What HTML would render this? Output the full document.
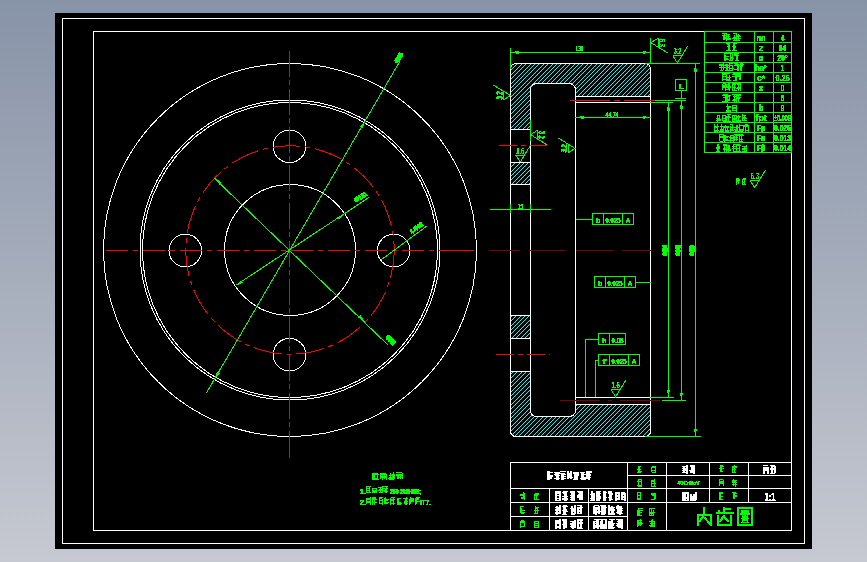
<!DOCTYPE html><html><head><meta charset="utf-8"><style>
html,body{margin:0;padding:0;width:867px;height:562px;overflow:hidden;font-family:"Liberation Sans",sans-serif}
body{background:linear-gradient(180deg,#8793a7 0%,#c6c9d1 100%)}
</style></head><body><svg width="867" height="562" viewBox="0 0 867 562" shape-rendering="crispEdges" style="position:absolute;left:0;top:0"><defs><filter id="px" x="-20%" y="-40%" width="140%" height="180%"><feComponentTransfer><feFuncA type="discrete" tableValues="0 1 1 1 1"/></feComponentTransfer></filter></defs>
<rect x="55" y="13" width="757" height="536" fill="#000"/>
<rect x="62.5" y="18.5" width="742" height="525" fill="none" stroke="#ffffff" />
<rect x="93.5" y="31.5" width="698" height="499" fill="none" stroke="#ffffff" />
<circle cx="290" cy="250" r="186.5" fill="none" stroke="#ffffff" />
<circle cx="290" cy="250" r="150" fill="none" stroke="#ffffff" />
<circle cx="290" cy="250" r="147.5" fill="none" stroke="#ffffff" />
<circle cx="290" cy="250" r="65.5" fill="none" stroke="#ffffff" />
<circle cx="185.3" cy="250.5" r="16.3" fill="none" stroke="#ffffff" />
<circle cx="393.7" cy="250.5" r="16.3" fill="none" stroke="#ffffff" />
<circle cx="289.5" cy="146.3" r="16.3" fill="none" stroke="#ffffff" />
<circle cx="289.5" cy="354.7" r="16.3" fill="none" stroke="#ffffff" />
<circle cx="290" cy="250" r="104.2" fill="none" stroke="#ff0000" stroke-dasharray="28 5 5 5"/>
<path d="M105.5,250.5L127.5,250.5M132.5,250.5L137.5,250.5M142.5,250.5L164.5,250.5M169.5,250.5L174.5,250.5M179.5,250.5L201.5,250.5M206.5,250.5L211.5,250.5M216.5,250.5L238.5,250.5M243.5,250.5L248.5,250.5M253.5,250.5L275.5,250.5M280.5,250.5L285.5,250.5M290.5,250.5L312.5,250.5M317.5,250.5L322.5,250.5M327.5,250.5L349.5,250.5M354.5,250.5L359.5,250.5M364.5,250.5L386.5,250.5M391.5,250.5L396.5,250.5M401.5,250.5L423.5,250.5M428.5,250.5L433.5,250.5M438.5,250.5L474.0,250.5" stroke="#ff0000"/>
<path d="M289.5,51.0L289.5,77.0M289.5,80.0L289.5,85.0M289.5,89.0L289.5,115.0M289.5,118.0L289.5,123.0M289.5,127.0L289.5,153.0M289.5,156.0L289.5,161.0M289.5,165.0L289.5,191.0M289.5,194.0L289.5,199.0M289.5,203.0L289.5,229.0M289.5,232.0L289.5,237.0M289.5,241.0L289.5,267.0M289.5,270.0L289.5,275.0M289.5,279.0L289.5,305.0M289.5,308.0L289.5,313.0M289.5,317.0L289.5,343.0M289.5,346.0L289.5,351.0M289.5,355.0L289.5,381.0M289.5,384.0L289.5,389.0M289.5,393.0L289.5,419.0M289.5,422.0L289.5,427.0M289.5,431.0L289.5,458.0" stroke="#ff0000"/>
<polygon points="365.4,120.9 362.8,128.6 360.0,127.0" fill="#00ff00"/>
<polygon points="214.6,379.1 217.2,371.4 220.0,373.0" fill="#00ff00"/>
<polygon points="214.8,177.9 221.7,182.3 219.5,184.6" fill="#00ff00"/>
<polygon points="365.2,322.1 358.3,317.7 360.5,315.4" fill="#00ff00"/>
<polygon points="344.8,214.1 339.0,219.9 337.2,217.2" fill="#00ff00"/>
<polygon points="235.2,285.9 241.0,280.1 242.8,282.8" fill="#00ff00"/>
<line x1="206.4" y1="393" x2="399.8" y2="61.4" stroke="#00ff00" />
<line x1="214" y1="178" x2="388" y2="345" stroke="#00ff00" />
<line x1="235.6" y1="285.4" x2="369.1" y2="197.4" stroke="#00ff00" />
<line x1="381" y1="260" x2="427.5" y2="225.5" stroke="#00ff00" />
<defs><pattern id="hat" patternUnits="userSpaceOnUse" width="4.4" height="4.4" patternTransform="rotate(45)"><rect x="0" y="0" width="1" height="4.4" fill="#00ffff"/></pattern></defs>
<defs><pattern id="hat2" patternUnits="userSpaceOnUse" width="3.1" height="10" patternTransform="rotate(45)"><rect x="0" y="0" width="0.72" height="10" fill="#00ffff" shape-rendering="crispEdges"/></pattern></defs>
<clipPath id="cp0"><path d="M510.5,129.5 L510.5,69.5 Q510.5,63.5 516.5,63.5 L644.5,63.5 Q650.5,63.5 650.5,69.5 L650.5,96.5 L575.5,96.5 L575.5,90.5 Q575.5,83.5 568.5,83.5 L537.5,83.5 Q530.5,83.5 530.5,90.5 L530.5,129.5 Z"/></clipPath>
<path d="M-18.5,440.5L362.5,60.5M-14.5,440.5L366.5,60.5M-9.5,440.5L371.5,60.5M-5.5,440.5L375.5,60.5M0.5,440.5L380.5,60.5M4.5,440.5L384.5,60.5M8.5,440.5L388.5,60.5M13.5,440.5L393.5,60.5M17.5,440.5L397.5,60.5M22.5,440.5L402.5,60.5M26.5,440.5L406.5,60.5M30.5,440.5L410.5,60.5M35.5,440.5L415.5,60.5M39.5,440.5L419.5,60.5M44.5,440.5L424.5,60.5M48.5,440.5L428.5,60.5M52.5,440.5L432.5,60.5M57.5,440.5L437.5,60.5M61.5,440.5L441.5,60.5M66.5,440.5L446.5,60.5M70.5,440.5L450.5,60.5M74.5,440.5L454.5,60.5M79.5,440.5L459.5,60.5M83.5,440.5L463.5,60.5M88.5,440.5L468.5,60.5M92.5,440.5L472.5,60.5M96.5,440.5L476.5,60.5M101.5,440.5L481.5,60.5M105.5,440.5L485.5,60.5M110.5,440.5L490.5,60.5M114.5,440.5L494.5,60.5M118.5,440.5L498.5,60.5M123.5,440.5L503.5,60.5M127.5,440.5L507.5,60.5M132.5,440.5L512.5,60.5M136.5,440.5L516.5,60.5M140.5,440.5L520.5,60.5M145.5,440.5L525.5,60.5M149.5,440.5L529.5,60.5M154.5,440.5L534.5,60.5M158.5,440.5L538.5,60.5M162.5,440.5L542.5,60.5M167.5,440.5L547.5,60.5M171.5,440.5L551.5,60.5M176.5,440.5L556.5,60.5M180.5,440.5L560.5,60.5M184.5,440.5L564.5,60.5M189.5,440.5L569.5,60.5M193.5,440.5L573.5,60.5M198.5,440.5L578.5,60.5M202.5,440.5L582.5,60.5M206.5,440.5L586.5,60.5M211.5,440.5L591.5,60.5M215.5,440.5L595.5,60.5M220.5,440.5L600.5,60.5M224.5,440.5L604.5,60.5M228.5,440.5L608.5,60.5M233.5,440.5L613.5,60.5M237.5,440.5L617.5,60.5M242.5,440.5L622.5,60.5M246.5,440.5L626.5,60.5M250.5,440.5L630.5,60.5M255.5,440.5L635.5,60.5M259.5,440.5L639.5,60.5M264.5,440.5L644.5,60.5M268.5,440.5L648.5,60.5M272.5,440.5L652.5,60.5M277.5,440.5L657.5,60.5M281.5,440.5L661.5,60.5M286.5,440.5L666.5,60.5M290.5,440.5L670.5,60.5M294.5,440.5L674.5,60.5M299.5,440.5L679.5,60.5M303.5,440.5L683.5,60.5M308.5,440.5L688.5,60.5M312.5,440.5L692.5,60.5M316.5,440.5L696.5,60.5M321.5,440.5L701.5,60.5M325.5,440.5L705.5,60.5M330.5,440.5L710.5,60.5M334.5,440.5L714.5,60.5M338.5,440.5L718.5,60.5M343.5,440.5L723.5,60.5M347.5,440.5L727.5,60.5M352.5,440.5L732.5,60.5M356.5,440.5L736.5,60.5M360.5,440.5L740.5,60.5M365.5,440.5L745.5,60.5M369.5,440.5L749.5,60.5M374.5,440.5L754.5,60.5M378.5,440.5L758.5,60.5M382.5,440.5L762.5,60.5M387.5,440.5L767.5,60.5M391.5,440.5L771.5,60.5M396.5,440.5L776.5,60.5M400.5,440.5L780.5,60.5M404.5,440.5L784.5,60.5M409.5,440.5L789.5,60.5M413.5,440.5L793.5,60.5M418.5,440.5L798.5,60.5M422.5,440.5L802.5,60.5M426.5,440.5L806.5,60.5M431.5,440.5L811.5,60.5M435.5,440.5L815.5,60.5M440.5,440.5L820.5,60.5M444.5,440.5L824.5,60.5M448.5,440.5L828.5,60.5M453.5,440.5L833.5,60.5M457.5,440.5L837.5,60.5M462.5,440.5L842.5,60.5M466.5,440.5L846.5,60.5M470.5,440.5L850.5,60.5M475.5,440.5L855.5,60.5M479.5,440.5L859.5,60.5M484.5,440.5L864.5,60.5M488.5,440.5L868.5,60.5M492.5,440.5L872.5,60.5M497.5,440.5L877.5,60.5M501.5,440.5L881.5,60.5M506.5,440.5L886.5,60.5M510.5,440.5L890.5,60.5M514.5,440.5L894.5,60.5M519.5,440.5L899.5,60.5M523.5,440.5L903.5,60.5M528.5,440.5L908.5,60.5M532.5,440.5L912.5,60.5M536.5,440.5L916.5,60.5M541.5,440.5L921.5,60.5M545.5,440.5L925.5,60.5M550.5,440.5L930.5,60.5M554.5,440.5L934.5,60.5M558.5,440.5L938.5,60.5M563.5,440.5L943.5,60.5M567.5,440.5L947.5,60.5M572.5,440.5L952.5,60.5M576.5,440.5L956.5,60.5M580.5,440.5L960.5,60.5M585.5,440.5L965.5,60.5M589.5,440.5L969.5,60.5M594.5,440.5L974.5,60.5M598.5,440.5L978.5,60.5M602.5,440.5L982.5,60.5M607.5,440.5L987.5,60.5M611.5,440.5L991.5,60.5M616.5,440.5L996.5,60.5M620.5,440.5L1000.5,60.5M624.5,440.5L1004.5,60.5M629.5,440.5L1009.5,60.5M633.5,440.5L1013.5,60.5M638.5,440.5L1018.5,60.5M642.5,440.5L1022.5,60.5M646.5,440.5L1026.5,60.5M651.5,440.5L1031.5,60.5M655.5,440.5L1035.5,60.5M660.5,440.5L1040.5,60.5M664.5,440.5L1044.5,60.5M668.5,440.5L1048.5,60.5M673.5,440.5L1053.5,60.5M677.5,440.5L1057.5,60.5M682.5,440.5L1062.5,60.5M686.5,440.5L1066.5,60.5M690.5,440.5L1070.5,60.5M695.5,440.5L1075.5,60.5M699.5,440.5L1079.5,60.5M704.5,440.5L1084.5,60.5M708.5,440.5L1088.5,60.5M712.5,440.5L1092.5,60.5M717.5,440.5L1097.5,60.5M721.5,440.5L1101.5,60.5M726.5,440.5L1106.5,60.5M730.5,440.5L1110.5,60.5M734.5,440.5L1114.5,60.5M739.5,440.5L1119.5,60.5M743.5,440.5L1123.5,60.5M748.5,440.5L1128.5,60.5M752.5,440.5L1132.5,60.5M756.5,440.5L1136.5,60.5M761.5,440.5L1141.5,60.5M765.5,440.5L1145.5,60.5M770.5,440.5L1150.5,60.5" stroke="#00ffff" stroke-width="1" shape-rendering="crispEdges" clip-path="url(#cp0)"/>
<path d="M510.5,129.5 L510.5,69.5 Q510.5,63.5 516.5,63.5 L644.5,63.5 Q650.5,63.5 650.5,69.5 L650.5,96.5 L575.5,96.5 L575.5,90.5 Q575.5,83.5 568.5,83.5 L537.5,83.5 Q530.5,83.5 530.5,90.5 L530.5,129.5 Z" fill="none" stroke="#ffffff"/>
<clipPath id="cp1"><path d="M510.5,162.5 L530.5,162.5 L530.5,184.5 L510.5,184.5 Z"/></clipPath>
<path d="M-18.5,440.5L362.5,60.5M-14.5,440.5L366.5,60.5M-9.5,440.5L371.5,60.5M-5.5,440.5L375.5,60.5M0.5,440.5L380.5,60.5M4.5,440.5L384.5,60.5M8.5,440.5L388.5,60.5M13.5,440.5L393.5,60.5M17.5,440.5L397.5,60.5M22.5,440.5L402.5,60.5M26.5,440.5L406.5,60.5M30.5,440.5L410.5,60.5M35.5,440.5L415.5,60.5M39.5,440.5L419.5,60.5M44.5,440.5L424.5,60.5M48.5,440.5L428.5,60.5M52.5,440.5L432.5,60.5M57.5,440.5L437.5,60.5M61.5,440.5L441.5,60.5M66.5,440.5L446.5,60.5M70.5,440.5L450.5,60.5M74.5,440.5L454.5,60.5M79.5,440.5L459.5,60.5M83.5,440.5L463.5,60.5M88.5,440.5L468.5,60.5M92.5,440.5L472.5,60.5M96.5,440.5L476.5,60.5M101.5,440.5L481.5,60.5M105.5,440.5L485.5,60.5M110.5,440.5L490.5,60.5M114.5,440.5L494.5,60.5M118.5,440.5L498.5,60.5M123.5,440.5L503.5,60.5M127.5,440.5L507.5,60.5M132.5,440.5L512.5,60.5M136.5,440.5L516.5,60.5M140.5,440.5L520.5,60.5M145.5,440.5L525.5,60.5M149.5,440.5L529.5,60.5M154.5,440.5L534.5,60.5M158.5,440.5L538.5,60.5M162.5,440.5L542.5,60.5M167.5,440.5L547.5,60.5M171.5,440.5L551.5,60.5M176.5,440.5L556.5,60.5M180.5,440.5L560.5,60.5M184.5,440.5L564.5,60.5M189.5,440.5L569.5,60.5M193.5,440.5L573.5,60.5M198.5,440.5L578.5,60.5M202.5,440.5L582.5,60.5M206.5,440.5L586.5,60.5M211.5,440.5L591.5,60.5M215.5,440.5L595.5,60.5M220.5,440.5L600.5,60.5M224.5,440.5L604.5,60.5M228.5,440.5L608.5,60.5M233.5,440.5L613.5,60.5M237.5,440.5L617.5,60.5M242.5,440.5L622.5,60.5M246.5,440.5L626.5,60.5M250.5,440.5L630.5,60.5M255.5,440.5L635.5,60.5M259.5,440.5L639.5,60.5M264.5,440.5L644.5,60.5M268.5,440.5L648.5,60.5M272.5,440.5L652.5,60.5M277.5,440.5L657.5,60.5M281.5,440.5L661.5,60.5M286.5,440.5L666.5,60.5M290.5,440.5L670.5,60.5M294.5,440.5L674.5,60.5M299.5,440.5L679.5,60.5M303.5,440.5L683.5,60.5M308.5,440.5L688.5,60.5M312.5,440.5L692.5,60.5M316.5,440.5L696.5,60.5M321.5,440.5L701.5,60.5M325.5,440.5L705.5,60.5M330.5,440.5L710.5,60.5M334.5,440.5L714.5,60.5M338.5,440.5L718.5,60.5M343.5,440.5L723.5,60.5M347.5,440.5L727.5,60.5M352.5,440.5L732.5,60.5M356.5,440.5L736.5,60.5M360.5,440.5L740.5,60.5M365.5,440.5L745.5,60.5M369.5,440.5L749.5,60.5M374.5,440.5L754.5,60.5M378.5,440.5L758.5,60.5M382.5,440.5L762.5,60.5M387.5,440.5L767.5,60.5M391.5,440.5L771.5,60.5M396.5,440.5L776.5,60.5M400.5,440.5L780.5,60.5M404.5,440.5L784.5,60.5M409.5,440.5L789.5,60.5M413.5,440.5L793.5,60.5M418.5,440.5L798.5,60.5M422.5,440.5L802.5,60.5M426.5,440.5L806.5,60.5M431.5,440.5L811.5,60.5M435.5,440.5L815.5,60.5M440.5,440.5L820.5,60.5M444.5,440.5L824.5,60.5M448.5,440.5L828.5,60.5M453.5,440.5L833.5,60.5M457.5,440.5L837.5,60.5M462.5,440.5L842.5,60.5M466.5,440.5L846.5,60.5M470.5,440.5L850.5,60.5M475.5,440.5L855.5,60.5M479.5,440.5L859.5,60.5M484.5,440.5L864.5,60.5M488.5,440.5L868.5,60.5M492.5,440.5L872.5,60.5M497.5,440.5L877.5,60.5M501.5,440.5L881.5,60.5M506.5,440.5L886.5,60.5M510.5,440.5L890.5,60.5M514.5,440.5L894.5,60.5M519.5,440.5L899.5,60.5M523.5,440.5L903.5,60.5M528.5,440.5L908.5,60.5M532.5,440.5L912.5,60.5M536.5,440.5L916.5,60.5M541.5,440.5L921.5,60.5M545.5,440.5L925.5,60.5M550.5,440.5L930.5,60.5M554.5,440.5L934.5,60.5M558.5,440.5L938.5,60.5M563.5,440.5L943.5,60.5M567.5,440.5L947.5,60.5M572.5,440.5L952.5,60.5M576.5,440.5L956.5,60.5M580.5,440.5L960.5,60.5M585.5,440.5L965.5,60.5M589.5,440.5L969.5,60.5M594.5,440.5L974.5,60.5M598.5,440.5L978.5,60.5M602.5,440.5L982.5,60.5M607.5,440.5L987.5,60.5M611.5,440.5L991.5,60.5M616.5,440.5L996.5,60.5M620.5,440.5L1000.5,60.5M624.5,440.5L1004.5,60.5M629.5,440.5L1009.5,60.5M633.5,440.5L1013.5,60.5M638.5,440.5L1018.5,60.5M642.5,440.5L1022.5,60.5M646.5,440.5L1026.5,60.5M651.5,440.5L1031.5,60.5M655.5,440.5L1035.5,60.5M660.5,440.5L1040.5,60.5M664.5,440.5L1044.5,60.5M668.5,440.5L1048.5,60.5M673.5,440.5L1053.5,60.5M677.5,440.5L1057.5,60.5M682.5,440.5L1062.5,60.5M686.5,440.5L1066.5,60.5M690.5,440.5L1070.5,60.5M695.5,440.5L1075.5,60.5M699.5,440.5L1079.5,60.5M704.5,440.5L1084.5,60.5M708.5,440.5L1088.5,60.5M712.5,440.5L1092.5,60.5M717.5,440.5L1097.5,60.5M721.5,440.5L1101.5,60.5M726.5,440.5L1106.5,60.5M730.5,440.5L1110.5,60.5M734.5,440.5L1114.5,60.5M739.5,440.5L1119.5,60.5M743.5,440.5L1123.5,60.5M748.5,440.5L1128.5,60.5M752.5,440.5L1132.5,60.5M756.5,440.5L1136.5,60.5M761.5,440.5L1141.5,60.5M765.5,440.5L1145.5,60.5M770.5,440.5L1150.5,60.5" stroke="#00ffff" stroke-width="1" shape-rendering="crispEdges" clip-path="url(#cp1)"/>
<path d="M510.5,162.5 L530.5,162.5 L530.5,184.5 L510.5,184.5 Z" fill="none" stroke="#ffffff"/>
<clipPath id="cp2"><path d="M510.5,315.5 L530.5,315.5 L530.5,338.5 L510.5,338.5 Z"/></clipPath>
<path d="M-18.5,440.5L362.5,60.5M-14.5,440.5L366.5,60.5M-9.5,440.5L371.5,60.5M-5.5,440.5L375.5,60.5M0.5,440.5L380.5,60.5M4.5,440.5L384.5,60.5M8.5,440.5L388.5,60.5M13.5,440.5L393.5,60.5M17.5,440.5L397.5,60.5M22.5,440.5L402.5,60.5M26.5,440.5L406.5,60.5M30.5,440.5L410.5,60.5M35.5,440.5L415.5,60.5M39.5,440.5L419.5,60.5M44.5,440.5L424.5,60.5M48.5,440.5L428.5,60.5M52.5,440.5L432.5,60.5M57.5,440.5L437.5,60.5M61.5,440.5L441.5,60.5M66.5,440.5L446.5,60.5M70.5,440.5L450.5,60.5M74.5,440.5L454.5,60.5M79.5,440.5L459.5,60.5M83.5,440.5L463.5,60.5M88.5,440.5L468.5,60.5M92.5,440.5L472.5,60.5M96.5,440.5L476.5,60.5M101.5,440.5L481.5,60.5M105.5,440.5L485.5,60.5M110.5,440.5L490.5,60.5M114.5,440.5L494.5,60.5M118.5,440.5L498.5,60.5M123.5,440.5L503.5,60.5M127.5,440.5L507.5,60.5M132.5,440.5L512.5,60.5M136.5,440.5L516.5,60.5M140.5,440.5L520.5,60.5M145.5,440.5L525.5,60.5M149.5,440.5L529.5,60.5M154.5,440.5L534.5,60.5M158.5,440.5L538.5,60.5M162.5,440.5L542.5,60.5M167.5,440.5L547.5,60.5M171.5,440.5L551.5,60.5M176.5,440.5L556.5,60.5M180.5,440.5L560.5,60.5M184.5,440.5L564.5,60.5M189.5,440.5L569.5,60.5M193.5,440.5L573.5,60.5M198.5,440.5L578.5,60.5M202.5,440.5L582.5,60.5M206.5,440.5L586.5,60.5M211.5,440.5L591.5,60.5M215.5,440.5L595.5,60.5M220.5,440.5L600.5,60.5M224.5,440.5L604.5,60.5M228.5,440.5L608.5,60.5M233.5,440.5L613.5,60.5M237.5,440.5L617.5,60.5M242.5,440.5L622.5,60.5M246.5,440.5L626.5,60.5M250.5,440.5L630.5,60.5M255.5,440.5L635.5,60.5M259.5,440.5L639.5,60.5M264.5,440.5L644.5,60.5M268.5,440.5L648.5,60.5M272.5,440.5L652.5,60.5M277.5,440.5L657.5,60.5M281.5,440.5L661.5,60.5M286.5,440.5L666.5,60.5M290.5,440.5L670.5,60.5M294.5,440.5L674.5,60.5M299.5,440.5L679.5,60.5M303.5,440.5L683.5,60.5M308.5,440.5L688.5,60.5M312.5,440.5L692.5,60.5M316.5,440.5L696.5,60.5M321.5,440.5L701.5,60.5M325.5,440.5L705.5,60.5M330.5,440.5L710.5,60.5M334.5,440.5L714.5,60.5M338.5,440.5L718.5,60.5M343.5,440.5L723.5,60.5M347.5,440.5L727.5,60.5M352.5,440.5L732.5,60.5M356.5,440.5L736.5,60.5M360.5,440.5L740.5,60.5M365.5,440.5L745.5,60.5M369.5,440.5L749.5,60.5M374.5,440.5L754.5,60.5M378.5,440.5L758.5,60.5M382.5,440.5L762.5,60.5M387.5,440.5L767.5,60.5M391.5,440.5L771.5,60.5M396.5,440.5L776.5,60.5M400.5,440.5L780.5,60.5M404.5,440.5L784.5,60.5M409.5,440.5L789.5,60.5M413.5,440.5L793.5,60.5M418.5,440.5L798.5,60.5M422.5,440.5L802.5,60.5M426.5,440.5L806.5,60.5M431.5,440.5L811.5,60.5M435.5,440.5L815.5,60.5M440.5,440.5L820.5,60.5M444.5,440.5L824.5,60.5M448.5,440.5L828.5,60.5M453.5,440.5L833.5,60.5M457.5,440.5L837.5,60.5M462.5,440.5L842.5,60.5M466.5,440.5L846.5,60.5M470.5,440.5L850.5,60.5M475.5,440.5L855.5,60.5M479.5,440.5L859.5,60.5M484.5,440.5L864.5,60.5M488.5,440.5L868.5,60.5M492.5,440.5L872.5,60.5M497.5,440.5L877.5,60.5M501.5,440.5L881.5,60.5M506.5,440.5L886.5,60.5M510.5,440.5L890.5,60.5M514.5,440.5L894.5,60.5M519.5,440.5L899.5,60.5M523.5,440.5L903.5,60.5M528.5,440.5L908.5,60.5M532.5,440.5L912.5,60.5M536.5,440.5L916.5,60.5M541.5,440.5L921.5,60.5M545.5,440.5L925.5,60.5M550.5,440.5L930.5,60.5M554.5,440.5L934.5,60.5M558.5,440.5L938.5,60.5M563.5,440.5L943.5,60.5M567.5,440.5L947.5,60.5M572.5,440.5L952.5,60.5M576.5,440.5L956.5,60.5M580.5,440.5L960.5,60.5M585.5,440.5L965.5,60.5M589.5,440.5L969.5,60.5M594.5,440.5L974.5,60.5M598.5,440.5L978.5,60.5M602.5,440.5L982.5,60.5M607.5,440.5L987.5,60.5M611.5,440.5L991.5,60.5M616.5,440.5L996.5,60.5M620.5,440.5L1000.5,60.5M624.5,440.5L1004.5,60.5M629.5,440.5L1009.5,60.5M633.5,440.5L1013.5,60.5M638.5,440.5L1018.5,60.5M642.5,440.5L1022.5,60.5M646.5,440.5L1026.5,60.5M651.5,440.5L1031.5,60.5M655.5,440.5L1035.5,60.5M660.5,440.5L1040.5,60.5M664.5,440.5L1044.5,60.5M668.5,440.5L1048.5,60.5M673.5,440.5L1053.5,60.5M677.5,440.5L1057.5,60.5M682.5,440.5L1062.5,60.5M686.5,440.5L1066.5,60.5M690.5,440.5L1070.5,60.5M695.5,440.5L1075.5,60.5M699.5,440.5L1079.5,60.5M704.5,440.5L1084.5,60.5M708.5,440.5L1088.5,60.5M712.5,440.5L1092.5,60.5M717.5,440.5L1097.5,60.5M721.5,440.5L1101.5,60.5M726.5,440.5L1106.5,60.5M730.5,440.5L1110.5,60.5M734.5,440.5L1114.5,60.5M739.5,440.5L1119.5,60.5M743.5,440.5L1123.5,60.5M748.5,440.5L1128.5,60.5M752.5,440.5L1132.5,60.5M756.5,440.5L1136.5,60.5M761.5,440.5L1141.5,60.5M765.5,440.5L1145.5,60.5M770.5,440.5L1150.5,60.5" stroke="#00ffff" stroke-width="1" shape-rendering="crispEdges" clip-path="url(#cp2)"/>
<path d="M510.5,315.5 L530.5,315.5 L530.5,338.5 L510.5,338.5 Z" fill="none" stroke="#ffffff"/>
<clipPath id="cp3"><path d="M510.5,371.5 L530.5,371.5 L530.5,409.5 Q530.5,416.5 537.5,416.5 L568.5,416.5 Q575.5,416.5 575.5,409.5 L575.5,404.5 L650.5,404.5 L650.5,430.5 Q650.5,436.5 644.5,436.5 L516.5,436.5 Q510.5,436.5 510.5,430.5 Z"/></clipPath>
<path d="M-18.5,440.5L362.5,60.5M-14.5,440.5L366.5,60.5M-9.5,440.5L371.5,60.5M-5.5,440.5L375.5,60.5M0.5,440.5L380.5,60.5M4.5,440.5L384.5,60.5M8.5,440.5L388.5,60.5M13.5,440.5L393.5,60.5M17.5,440.5L397.5,60.5M22.5,440.5L402.5,60.5M26.5,440.5L406.5,60.5M30.5,440.5L410.5,60.5M35.5,440.5L415.5,60.5M39.5,440.5L419.5,60.5M44.5,440.5L424.5,60.5M48.5,440.5L428.5,60.5M52.5,440.5L432.5,60.5M57.5,440.5L437.5,60.5M61.5,440.5L441.5,60.5M66.5,440.5L446.5,60.5M70.5,440.5L450.5,60.5M74.5,440.5L454.5,60.5M79.5,440.5L459.5,60.5M83.5,440.5L463.5,60.5M88.5,440.5L468.5,60.5M92.5,440.5L472.5,60.5M96.5,440.5L476.5,60.5M101.5,440.5L481.5,60.5M105.5,440.5L485.5,60.5M110.5,440.5L490.5,60.5M114.5,440.5L494.5,60.5M118.5,440.5L498.5,60.5M123.5,440.5L503.5,60.5M127.5,440.5L507.5,60.5M132.5,440.5L512.5,60.5M136.5,440.5L516.5,60.5M140.5,440.5L520.5,60.5M145.5,440.5L525.5,60.5M149.5,440.5L529.5,60.5M154.5,440.5L534.5,60.5M158.5,440.5L538.5,60.5M162.5,440.5L542.5,60.5M167.5,440.5L547.5,60.5M171.5,440.5L551.5,60.5M176.5,440.5L556.5,60.5M180.5,440.5L560.5,60.5M184.5,440.5L564.5,60.5M189.5,440.5L569.5,60.5M193.5,440.5L573.5,60.5M198.5,440.5L578.5,60.5M202.5,440.5L582.5,60.5M206.5,440.5L586.5,60.5M211.5,440.5L591.5,60.5M215.5,440.5L595.5,60.5M220.5,440.5L600.5,60.5M224.5,440.5L604.5,60.5M228.5,440.5L608.5,60.5M233.5,440.5L613.5,60.5M237.5,440.5L617.5,60.5M242.5,440.5L622.5,60.5M246.5,440.5L626.5,60.5M250.5,440.5L630.5,60.5M255.5,440.5L635.5,60.5M259.5,440.5L639.5,60.5M264.5,440.5L644.5,60.5M268.5,440.5L648.5,60.5M272.5,440.5L652.5,60.5M277.5,440.5L657.5,60.5M281.5,440.5L661.5,60.5M286.5,440.5L666.5,60.5M290.5,440.5L670.5,60.5M294.5,440.5L674.5,60.5M299.5,440.5L679.5,60.5M303.5,440.5L683.5,60.5M308.5,440.5L688.5,60.5M312.5,440.5L692.5,60.5M316.5,440.5L696.5,60.5M321.5,440.5L701.5,60.5M325.5,440.5L705.5,60.5M330.5,440.5L710.5,60.5M334.5,440.5L714.5,60.5M338.5,440.5L718.5,60.5M343.5,440.5L723.5,60.5M347.5,440.5L727.5,60.5M352.5,440.5L732.5,60.5M356.5,440.5L736.5,60.5M360.5,440.5L740.5,60.5M365.5,440.5L745.5,60.5M369.5,440.5L749.5,60.5M374.5,440.5L754.5,60.5M378.5,440.5L758.5,60.5M382.5,440.5L762.5,60.5M387.5,440.5L767.5,60.5M391.5,440.5L771.5,60.5M396.5,440.5L776.5,60.5M400.5,440.5L780.5,60.5M404.5,440.5L784.5,60.5M409.5,440.5L789.5,60.5M413.5,440.5L793.5,60.5M418.5,440.5L798.5,60.5M422.5,440.5L802.5,60.5M426.5,440.5L806.5,60.5M431.5,440.5L811.5,60.5M435.5,440.5L815.5,60.5M440.5,440.5L820.5,60.5M444.5,440.5L824.5,60.5M448.5,440.5L828.5,60.5M453.5,440.5L833.5,60.5M457.5,440.5L837.5,60.5M462.5,440.5L842.5,60.5M466.5,440.5L846.5,60.5M470.5,440.5L850.5,60.5M475.5,440.5L855.5,60.5M479.5,440.5L859.5,60.5M484.5,440.5L864.5,60.5M488.5,440.5L868.5,60.5M492.5,440.5L872.5,60.5M497.5,440.5L877.5,60.5M501.5,440.5L881.5,60.5M506.5,440.5L886.5,60.5M510.5,440.5L890.5,60.5M514.5,440.5L894.5,60.5M519.5,440.5L899.5,60.5M523.5,440.5L903.5,60.5M528.5,440.5L908.5,60.5M532.5,440.5L912.5,60.5M536.5,440.5L916.5,60.5M541.5,440.5L921.5,60.5M545.5,440.5L925.5,60.5M550.5,440.5L930.5,60.5M554.5,440.5L934.5,60.5M558.5,440.5L938.5,60.5M563.5,440.5L943.5,60.5M567.5,440.5L947.5,60.5M572.5,440.5L952.5,60.5M576.5,440.5L956.5,60.5M580.5,440.5L960.5,60.5M585.5,440.5L965.5,60.5M589.5,440.5L969.5,60.5M594.5,440.5L974.5,60.5M598.5,440.5L978.5,60.5M602.5,440.5L982.5,60.5M607.5,440.5L987.5,60.5M611.5,440.5L991.5,60.5M616.5,440.5L996.5,60.5M620.5,440.5L1000.5,60.5M624.5,440.5L1004.5,60.5M629.5,440.5L1009.5,60.5M633.5,440.5L1013.5,60.5M638.5,440.5L1018.5,60.5M642.5,440.5L1022.5,60.5M646.5,440.5L1026.5,60.5M651.5,440.5L1031.5,60.5M655.5,440.5L1035.5,60.5M660.5,440.5L1040.5,60.5M664.5,440.5L1044.5,60.5M668.5,440.5L1048.5,60.5M673.5,440.5L1053.5,60.5M677.5,440.5L1057.5,60.5M682.5,440.5L1062.5,60.5M686.5,440.5L1066.5,60.5M690.5,440.5L1070.5,60.5M695.5,440.5L1075.5,60.5M699.5,440.5L1079.5,60.5M704.5,440.5L1084.5,60.5M708.5,440.5L1088.5,60.5M712.5,440.5L1092.5,60.5M717.5,440.5L1097.5,60.5M721.5,440.5L1101.5,60.5M726.5,440.5L1106.5,60.5M730.5,440.5L1110.5,60.5M734.5,440.5L1114.5,60.5M739.5,440.5L1119.5,60.5M743.5,440.5L1123.5,60.5M748.5,440.5L1128.5,60.5M752.5,440.5L1132.5,60.5M756.5,440.5L1136.5,60.5M761.5,440.5L1141.5,60.5M765.5,440.5L1145.5,60.5M770.5,440.5L1150.5,60.5" stroke="#00ffff" stroke-width="1" shape-rendering="crispEdges" clip-path="url(#cp3)"/>
<path d="M510.5,371.5 L530.5,371.5 L530.5,409.5 Q530.5,416.5 537.5,416.5 L568.5,416.5 Q575.5,416.5 575.5,409.5 L575.5,404.5 L650.5,404.5 L650.5,430.5 Q650.5,436.5 644.5,436.5 L516.5,436.5 Q510.5,436.5 510.5,430.5 Z" fill="none" stroke="#ffffff"/>
<line x1="510.5" y1="129.5" x2="510.5" y2="371.5" stroke="#ffffff" />
<line x1="530.5" y1="129.5" x2="530.5" y2="371.5" stroke="#ffffff" />
<line x1="575.5" y1="90.5" x2="575.5" y2="404.5" stroke="#ffffff" />
<line x1="650.5" y1="96.5" x2="650.5" y2="404.5" stroke="#ffffff" />
<line x1="570" y1="100.5" x2="655" y2="100.5" stroke="#ff0000" stroke-dasharray="40 4 6 4 60"/>
<line x1="530.5" y1="120" x2="530.5" y2="141" stroke="#00ff00" />
<line x1="576" y1="102.5" x2="650" y2="102.5" stroke="#ffffff" />
<line x1="576" y1="397.5" x2="650" y2="397.5" stroke="#ffffff" />
<line x1="560" y1="400.5" x2="662" y2="400.5" stroke="#800000" stroke-dasharray="40 8 4 8"/>
<path d="M489,250.5H519M529,250.5H566M576,250.5H613M622,250.5H652" stroke="#800000"/>
<line x1="499" y1="145.5" x2="547" y2="145.5" stroke="#ff0000" stroke-dasharray="18 4 5 4"/>
<line x1="496" y1="354.5" x2="550" y2="354.5" stroke="#ff0000" stroke-dasharray="18 4 5 4"/>
<line x1="510.5" y1="48" x2="510.5" y2="69" stroke="#00ff00" />
<line x1="650.5" y1="38" x2="650.5" y2="63" stroke="#00ff00" />
<line x1="510.5" y1="52.5" x2="650.5" y2="52.5" stroke="#00ff00" />
<line x1="645" y1="63.5" x2="700" y2="63.5" stroke="#00ff00" />
<line x1="645" y1="436.5" x2="701" y2="436.5" stroke="#00ff00" />
<line x1="655" y1="100.5" x2="686" y2="100.5" stroke="#00ff00" />
<line x1="650" y1="102.5" x2="673" y2="102.5" stroke="#00ff00" />
<line x1="650" y1="397.5" x2="673.5" y2="397.5" stroke="#00ff00" />
<line x1="662" y1="400.5" x2="686" y2="400.5" stroke="#00ff00" />
<line x1="668.5" y1="102.5" x2="668.5" y2="397.5" stroke="#00ff00" />
<line x1="681.5" y1="90.5" x2="681.5" y2="98.5" stroke="#00ff00" />
<line x1="675" y1="98.5" x2="686" y2="98.5" stroke="#00ff00" />
<line x1="681.5" y1="100.5" x2="681.5" y2="400.5" stroke="#00ff00" />
<line x1="695.5" y1="63.5" x2="695.5" y2="436.5" stroke="#00ff00" />
<rect x="675.5" y="79.5" width="11" height="11" fill="none" stroke="#00ff00" />
<line x1="575.5" y1="117.5" x2="650.5" y2="117.5" stroke="#00ff00" />
<line x1="490" y1="209.5" x2="551" y2="209.5" stroke="#00ff00" />
<rect x="592.5" y="213.5" width="41" height="11" fill="none" stroke="#00ff00" />
<line x1="603.5" y1="213.5" x2="603.5" y2="224.5" stroke="#00ff00" />
<line x1="622.5" y1="213.5" x2="622.5" y2="224.5" stroke="#00ff00" />
<line x1="575.5" y1="219.5" x2="592" y2="219.5" stroke="#00ff00" />
<rect x="594.5" y="276.5" width="41" height="11" fill="none" stroke="#00ff00" />
<line x1="605.5" y1="276.5" x2="605.5" y2="287.5" stroke="#00ff00" />
<line x1="624.5" y1="276.5" x2="624.5" y2="287.5" stroke="#00ff00" />
<line x1="635" y1="282.5" x2="650.5" y2="282.5" stroke="#00ff00" />
<rect x="598.5" y="333.5" width="27" height="11" fill="none" stroke="#00ff00" />
<line x1="609.5" y1="333.5" x2="609.5" y2="344.5" stroke="#00ff00" />
<polyline points="598,339.5 585.5,339.5 585.5,397" fill="none" stroke="#00ff00" />
<rect x="598.5" y="354.5" width="41" height="11" fill="none" stroke="#00ff00" />
<line x1="609.5" y1="354.5" x2="609.5" y2="365.5" stroke="#00ff00" />
<line x1="628.5" y1="354.5" x2="628.5" y2="365.5" stroke="#00ff00" />
<polyline points="598,360.5 595.5,360.5 595.5,397" fill="none" stroke="#00ff00" />
<rect x="510.5" y="462.5" width="281" height="68" fill="none" stroke="#ffffff" />
<line x1="510.5" y1="488.5" x2="791.5" y2="488.5" stroke="#ffffff" />
<line x1="510.5" y1="502.5" x2="791.5" y2="502.5" stroke="#ffffff" />
<line x1="510.5" y1="516.5" x2="627.5" y2="516.5" stroke="#ffffff" />
<line x1="627.5" y1="475.5" x2="791.5" y2="475.5" stroke="#ffffff" />
<line x1="549.5" y1="488.5" x2="549.5" y2="530.5" stroke="#ffffff" />
<line x1="588.5" y1="488.5" x2="588.5" y2="530.5" stroke="#ffffff" />
<line x1="627.5" y1="462.5" x2="627.5" y2="530.5" stroke="#ffffff" />
<line x1="666.5" y1="462.5" x2="666.5" y2="530.5" stroke="#ffffff" />
<line x1="709.5" y1="462.5" x2="709.5" y2="502.5" stroke="#ffffff" />
<line x1="748.5" y1="462.5" x2="748.5" y2="502.5" stroke="#ffffff" />
<line x1="704.5" y1="42.5" x2="791.5" y2="42.5" stroke="#00ff00" />
<line x1="704.5" y1="52.5" x2="791.5" y2="52.5" stroke="#00ff00" />
<line x1="704.5" y1="62.5" x2="791.5" y2="62.5" stroke="#00ff00" />
<line x1="704.5" y1="72.5" x2="791.5" y2="72.5" stroke="#00ff00" />
<line x1="704.5" y1="82.5" x2="791.5" y2="82.5" stroke="#00ff00" />
<line x1="704.5" y1="92.5" x2="791.5" y2="92.5" stroke="#00ff00" />
<line x1="704.5" y1="102.5" x2="791.5" y2="102.5" stroke="#00ff00" />
<line x1="704.5" y1="112.5" x2="791.5" y2="112.5" stroke="#00ff00" />
<line x1="704.5" y1="122.5" x2="791.5" y2="122.5" stroke="#00ff00" />
<line x1="704.5" y1="132.5" x2="791.5" y2="132.5" stroke="#00ff00" />
<line x1="704.5" y1="142.5" x2="791.5" y2="142.5" stroke="#00ff00" />
<line x1="754.5" y1="31.5" x2="754.5" y2="152.5" stroke="#00ff00" />
<line x1="773.5" y1="31.5" x2="773.5" y2="152.5" stroke="#00ff00" />
<rect x="704.5" y="31.5" width="87" height="121" fill="none" stroke="#00ff00"/>
<g transform="translate(510.4,95.5) rotate(-90) scale(1.0)" stroke="#00ff00" fill="none"><polyline points="-4.5,-7 0,0 10.5,-17"/><line x1="-4.5" y1="-7" x2="4.5" y2="-7"/><text filter="url(#px)" x="0" y="-8.5" font-family="Liberation Sans" font-size="9.5" font-weight="normal" fill="#00ff00" stroke="none" text-anchor="middle" textLength="8" lengthAdjust="spacingAndGlyphs">3.2</text></g>
<g transform="translate(651,42.7) rotate(90) scale(1.0)" stroke="#00ff00" fill="none"><polyline points="-4.5,-7 0,0 10.5,-17"/><line x1="-4.5" y1="-7" x2="4.5" y2="-7"/><text filter="url(#px)" x="0" y="-8.5" font-family="Liberation Sans" font-size="9.5" font-weight="normal" fill="#00ff00" stroke="none" text-anchor="middle" textLength="8" lengthAdjust="spacingAndGlyphs">6.3</text></g>
<g transform="translate(677.4,62.9) rotate(0) scale(1.0)" stroke="#00ff00" fill="none"><polyline points="-4.5,-7 0,0 10.5,-17"/><line x1="-4.5" y1="-7" x2="4.5" y2="-7"/><text filter="url(#px)" x="0" y="-8.5" font-family="Liberation Sans" font-size="9.5" font-weight="normal" fill="#00ff00" stroke="none" text-anchor="middle" textLength="8" lengthAdjust="spacingAndGlyphs">3.2</text></g>
<g transform="translate(530.6,134.7) rotate(90) scale(1.0)" stroke="#00ff00" fill="none"><polyline points="-4.5,-7 0,0 10.5,-17"/><line x1="-4.5" y1="-7" x2="4.5" y2="-7"/><text filter="url(#px)" x="0" y="-8.5" font-family="Liberation Sans" font-size="9.5" font-weight="normal" fill="#00ff00" stroke="none" text-anchor="middle" textLength="8" lengthAdjust="spacingAndGlyphs">3.2</text></g>
<g transform="translate(520.2,162) rotate(0) scale(1.0)" stroke="#00ff00" fill="none"><polyline points="-4.5,-7 0,0 10.5,-17"/><line x1="-4.5" y1="-7" x2="4.5" y2="-7"/><text filter="url(#px)" x="0" y="-8.5" font-family="Liberation Sans" font-size="9.5" font-weight="normal" fill="#00ff00" stroke="none" text-anchor="middle" textLength="8" lengthAdjust="spacingAndGlyphs">1.6</text></g>
<g transform="translate(575,148.4) rotate(-90) scale(1.0)" stroke="#00ff00" fill="none"><polyline points="-4.5,-7 0,0 10.5,-17"/><line x1="-4.5" y1="-7" x2="4.5" y2="-7"/><text filter="url(#px)" x="0" y="-8.5" font-family="Liberation Sans" font-size="9.5" font-weight="normal" fill="#00ff00" stroke="none" text-anchor="middle" textLength="8" lengthAdjust="spacingAndGlyphs">3.2</text></g>
<g transform="translate(615.6,396.8) rotate(0) scale(1.0)" stroke="#00ff00" fill="none"><polyline points="-4.5,-7 0,0 10.5,-17"/><line x1="-4.5" y1="-7" x2="4.5" y2="-7"/><text filter="url(#px)" x="0" y="-8.5" font-family="Liberation Sans" font-size="9.5" font-weight="normal" fill="#00ff00" stroke="none" text-anchor="middle" textLength="8" lengthAdjust="spacingAndGlyphs">1.6</text></g>
<g transform="translate(754.7,187.6) rotate(0) scale(1.05)" stroke="#00ff00" fill="none"><polyline points="-4.5,-7 0,0 10.5,-17"/><line x1="-4.5" y1="-7" x2="4.5" y2="-7"/><text filter="url(#px)" x="0" y="-8.5" font-family="Liberation Sans" font-size="9.5" font-weight="normal" fill="#00ff00" stroke="none" text-anchor="middle" textLength="8" lengthAdjust="spacingAndGlyphs">6.3</text></g>
<path d="M736,178.5H739M736,179.5H740M736,180.5H740M737,181.5H739M736.5,178V185M738.5,178V184" stroke="#00ff00" shape-rendering="crispEdges"/>
<path d="M743,178.5H746M742,179.5H746M742,182.5H745M743,184.5H746M742.5,180V185M744.5,180V184" stroke="#00ff00" shape-rendering="crispEdges"/>
<text filter="url(#px)" x="579.5" y="51" font-family="Liberation Sans" font-size="8" font-weight="normal" fill="#00ff00" text-anchor="middle" textLength="8" lengthAdjust="spacingAndGlyphs">138</text>
<text filter="url(#px)" x="612" y="116.5" font-family="Liberation Sans" font-size="7" font-weight="normal" fill="#00ff00" text-anchor="middle" textLength="13" lengthAdjust="spacingAndGlyphs">44.74</text>
<text filter="url(#px)" x="520.5" y="209" font-family="Liberation Sans" font-size="8" font-weight="normal" fill="#00ff00" text-anchor="middle" textLength="5" lengthAdjust="spacingAndGlyphs">15</text>
<line x1="510.5" y1="204" x2="510.5" y2="213" stroke="#00ff00" />
<line x1="530.5" y1="204" x2="530.5" y2="213" stroke="#00ff00" />
<text filter="url(#px)" x="667" y="250.5" font-family="Liberation Sans" font-size="8" font-weight="bold" fill="#00ff00" text-anchor="middle" transform="rotate(-90 667 250.5)" textLength="11" lengthAdjust="spacingAndGlyphs">Φ364</text>
<text filter="url(#px)" x="680" y="250.5" font-family="Liberation Sans" font-size="8" font-weight="bold" fill="#00ff00" text-anchor="middle" transform="rotate(-90 680 250.5)" textLength="11" lengthAdjust="spacingAndGlyphs">Φ345</text>
<text filter="url(#px)" x="694" y="250.5" font-family="Liberation Sans" font-size="8" font-weight="bold" fill="#00ff00" text-anchor="middle" transform="rotate(-90 694 250.5)" textLength="11" lengthAdjust="spacingAndGlyphs">Φ380</text>
<text filter="url(#px)" x="598" y="222.5" font-family="Liberation Sans" font-size="7" font-weight="bold" fill="#00ff00" text-anchor="middle" textLength="5" lengthAdjust="spacingAndGlyphs">b</text>
<text filter="url(#px)" x="613" y="222.5" font-family="Liberation Sans" font-size="7" font-weight="bold" fill="#00ff00" text-anchor="middle" textLength="15" lengthAdjust="spacingAndGlyphs">0.025</text>
<text filter="url(#px)" x="628" y="222.5" font-family="Liberation Sans" font-size="7" font-weight="bold" fill="#00ff00" text-anchor="middle" textLength="5" lengthAdjust="spacingAndGlyphs">A</text>
<text filter="url(#px)" x="600" y="285.5" font-family="Liberation Sans" font-size="7" font-weight="bold" fill="#00ff00" text-anchor="middle" textLength="5" lengthAdjust="spacingAndGlyphs">b</text>
<text filter="url(#px)" x="615" y="285.5" font-family="Liberation Sans" font-size="7" font-weight="bold" fill="#00ff00" text-anchor="middle" textLength="15" lengthAdjust="spacingAndGlyphs">0.025</text>
<text filter="url(#px)" x="630" y="285.5" font-family="Liberation Sans" font-size="7" font-weight="bold" fill="#00ff00" text-anchor="middle" textLength="5" lengthAdjust="spacingAndGlyphs">A</text>
<text filter="url(#px)" x="604" y="342.5" font-family="Liberation Sans" font-size="7" font-weight="bold" fill="#00ff00" text-anchor="middle" textLength="5" lengthAdjust="spacingAndGlyphs">h</text>
<text filter="url(#px)" x="617.5" y="342.5" font-family="Liberation Sans" font-size="7" font-weight="bold" fill="#00ff00" text-anchor="middle" textLength="12" lengthAdjust="spacingAndGlyphs">0.08</text>
<text filter="url(#px)" x="604" y="363.5" font-family="Liberation Sans" font-size="7" font-weight="bold" fill="#00ff00" text-anchor="middle" textLength="5" lengthAdjust="spacingAndGlyphs">f</text>
<text filter="url(#px)" x="619" y="363.5" font-family="Liberation Sans" font-size="7" font-weight="bold" fill="#00ff00" text-anchor="middle" textLength="15" lengthAdjust="spacingAndGlyphs">0.025</text>
<text filter="url(#px)" x="634" y="363.5" font-family="Liberation Sans" font-size="7" font-weight="bold" fill="#00ff00" text-anchor="middle" textLength="5" lengthAdjust="spacingAndGlyphs">A</text>
<text filter="url(#px)" x="681.5" y="89" font-family="Liberation Sans" font-size="8" font-weight="bold" fill="#00ff00" text-anchor="middle" >L</text>
<polygon transform="translate(668.5,102.5) rotate(-90)" points="0,0 -8,-1.6 -8,1.6" fill="#00ff00"/>
<polygon transform="translate(668.5,397.5) rotate(90)" points="0,0 -8,-1.6 -8,1.6" fill="#00ff00"/>
<polygon transform="translate(681.5,100.5) rotate(-90)" points="0,0 -8,-1.6 -8,1.6" fill="#00ff00"/>
<polygon transform="translate(681.5,400.5) rotate(90)" points="0,0 -8,-1.6 -8,1.6" fill="#00ff00"/>
<polygon transform="translate(695.5,63.5) rotate(-90)" points="0,0 -8,-1.6 -8,1.6" fill="#00ff00"/>
<polygon transform="translate(695.5,436.5) rotate(90)" points="0,0 -8,-1.6 -8,1.6" fill="#00ff00"/>
<polygon transform="translate(510.5,52.5) rotate(180)" points="0,0 -8,-1.6 -8,1.6" fill="#00ff00"/>
<polygon transform="translate(650.5,52.5) rotate(0)" points="0,0 -8,-1.6 -8,1.6" fill="#00ff00"/>
<polygon transform="translate(575.5,117.5) rotate(180)" points="0,0 -8,-1.6 -8,1.6" fill="#00ff00"/>
<polygon transform="translate(650.5,117.5) rotate(0)" points="0,0 -8,-1.6 -8,1.6" fill="#00ff00"/>
<path d="M722,33.5H727M722,35.5H727M723,37.5H726M723,38.5H726M723.5,35V40M724.5,34V40" stroke="#00ff00" shape-rendering="crispEdges"/>
<path d="M727,34.5H730M727,36.5H730M726,38.5H731M727,39.5H731M726.5,34V41M728.5,34V40" stroke="#00ff00" shape-rendering="crispEdges"/>
<path d="M733,33.5H736M733,37.5H736M732,38.5H737M733,40.5H736M734.5,35V41M736.5,33V40" stroke="#00ff00" shape-rendering="crispEdges"/>
<path d="M737,35.5H740M736,36.5H741M737,38.5H741M736,40.5H740M736.5,33V41M738.5,34V40" stroke="#00ff00" shape-rendering="crispEdges"/>
<text filter="url(#px)" x="761" y="40.5" font-family="Liberation Sans" font-size="9" font-weight="bold" fill="#00ff00" text-anchor="middle" textLength="8.0" lengthAdjust="spacingAndGlyphs">mn</text>
<text filter="url(#px)" x="782.5" y="40.5" font-family="Liberation Sans" font-size="9" font-weight="bold" fill="#00ff00" text-anchor="middle" textLength="3.5" lengthAdjust="spacingAndGlyphs">4</text>
<path d="M726,43.5H730M727,44.5H730M727,46.5H730M726,50.5H731M728.5,43V51M729.5,43V51" stroke="#00ff00" shape-rendering="crispEdges"/>
<path d="M733,43.5H737M732,46.5H736M733,47.5H736M732,50.5H737M733.5,44V50M734.5,44V50" stroke="#00ff00" shape-rendering="crispEdges"/>
<text filter="url(#px)" x="761" y="50.583333333333336" font-family="Liberation Sans" font-size="9" font-weight="bold" fill="#00ff00" text-anchor="middle" textLength="4.5" lengthAdjust="spacingAndGlyphs">z</text>
<text filter="url(#px)" x="782.5" y="50.583333333333336" font-family="Liberation Sans" font-size="9" font-weight="bold" fill="#00ff00" text-anchor="middle" textLength="7.0" lengthAdjust="spacingAndGlyphs">84</text>
<path d="M724,53.5H729M725,56.5H729M724,58.5H728M724,59.5H729M724.5,53V61M725.5,55V61" stroke="#00ff00" shape-rendering="crispEdges"/>
<path d="M729,53.5H733M730,57.5H733M730,58.5H734M729,60.5H733M730.5,54V60M732.5,54V60" stroke="#00ff00" shape-rendering="crispEdges"/>
<path d="M734,53.5H739M734,54.5H738M734,55.5H739M735,60.5H739M736.5,55V60M737.5,55V60" stroke="#00ff00" shape-rendering="crispEdges"/>
<text filter="url(#px)" x="761" y="60.66666666666667" font-family="Liberation Sans" font-size="9" font-weight="bold" fill="#00ff00" text-anchor="middle" textLength="4.5" lengthAdjust="spacingAndGlyphs">α</text>
<text filter="url(#px)" x="782.5" y="60.66666666666667" font-family="Liberation Sans" font-size="9" font-weight="bold" fill="#00ff00" text-anchor="middle" textLength="10.5" lengthAdjust="spacingAndGlyphs">20°</text>
<path d="M719,64.5H724M719,65.5H723M719,67.5H724M720,70.5H723M721.5,65V71M723.5,63V70" stroke="#00ff00" shape-rendering="crispEdges"/>
<path d="M725,64.5H728M724,65.5H729M724,67.5H729M725,70.5H729M726.5,64V71M727.5,64V71" stroke="#00ff00" shape-rendering="crispEdges"/>
<path d="M729,63.5H733M729,65.5H733M730,68.5H734M730,70.5H733M729.5,64V71M732.5,65V71" stroke="#00ff00" shape-rendering="crispEdges"/>
<path d="M734,63.5H738M735,64.5H739M734,65.5H739M734,69.5H739M737.5,65V71M738.5,64V71" stroke="#00ff00" shape-rendering="crispEdges"/>
<path d="M740,63.5H743M740,64.5H744M739,65.5H743M740,66.5H743M740.5,65V71M741.5,65V71" stroke="#00ff00" shape-rendering="crispEdges"/>
<text filter="url(#px)" x="761" y="70.75" font-family="Liberation Sans" font-size="9" font-weight="bold" fill="#00ff00" text-anchor="middle" textLength="11.5" lengthAdjust="spacingAndGlyphs">ha*</text>
<text filter="url(#px)" x="782.5" y="70.75" font-family="Liberation Sans" font-size="9" font-weight="bold" fill="#00ff00" text-anchor="middle" textLength="3.5" lengthAdjust="spacingAndGlyphs">1</text>
<path d="M722,73.5H727M722,74.5H726M722,76.5H727M723,79.5H726M722.5,73V81M726.5,73V81" stroke="#00ff00" shape-rendering="crispEdges"/>
<path d="M726,73.5H730M727,77.5H731M727,79.5H730M727,80.5H731M726.5,75V80M729.5,75V81" stroke="#00ff00" shape-rendering="crispEdges"/>
<path d="M733,73.5H737M732,74.5H736M732,76.5H737M733,80.5H737M735.5,73V80M736.5,73V80" stroke="#00ff00" shape-rendering="crispEdges"/>
<path d="M736,73.5H741M736,74.5H740M737,75.5H740M737,76.5H741M739.5,74V80M740.5,73V80" stroke="#00ff00" shape-rendering="crispEdges"/>
<text filter="url(#px)" x="761" y="80.83333333333334" font-family="Liberation Sans" font-size="9" font-weight="bold" fill="#00ff00" text-anchor="middle" textLength="8.0" lengthAdjust="spacingAndGlyphs">c*</text>
<text filter="url(#px)" x="782.5" y="80.83333333333334" font-family="Liberation Sans" font-size="9" font-weight="bold" fill="#00ff00" text-anchor="middle" textLength="14.0" lengthAdjust="spacingAndGlyphs">0.25</text>
<path d="M723,83.5H726M723,85.5H727M722,86.5H727M722,87.5H727M722.5,84V90M725.5,83V91" stroke="#00ff00" shape-rendering="crispEdges"/>
<path d="M726,84.5H730M727,86.5H731M727,87.5H731M726,89.5H730M728.5,83V90M729.5,83V91" stroke="#00ff00" shape-rendering="crispEdges"/>
<path d="M732,83.5H736M732,84.5H736M733,87.5H736M732,90.5H737M732.5,85V91M734.5,83V91" stroke="#00ff00" shape-rendering="crispEdges"/>
<path d="M736,83.5H740M737,84.5H741M737,87.5H740M736,88.5H740M738.5,83V91M740.5,83V91" stroke="#00ff00" shape-rendering="crispEdges"/>
<text filter="url(#px)" x="761" y="90.91666666666666" font-family="Liberation Sans" font-size="9" font-weight="bold" fill="#00ff00" text-anchor="middle" textLength="4.5" lengthAdjust="spacingAndGlyphs">x</text>
<text filter="url(#px)" x="782.5" y="90.91666666666666" font-family="Liberation Sans" font-size="9" font-weight="bold" fill="#00ff00" text-anchor="middle" textLength="3.5" lengthAdjust="spacingAndGlyphs">0</text>
<path d="M723,94.5H726M722,95.5H727M723,97.5H727M722,101.5H726M725.5,95V102M726.5,94V102" stroke="#00ff00" shape-rendering="crispEdges"/>
<path d="M726,95.5H731M727,96.5H730M726,99.5H730M726,100.5H730M727.5,94V102M729.5,95V101" stroke="#00ff00" shape-rendering="crispEdges"/>
<path d="M732,94.5H737M733,96.5H737M733,99.5H737M732,100.5H736M734.5,95V102M736.5,95V101" stroke="#00ff00" shape-rendering="crispEdges"/>
<path d="M736,94.5H741M737,95.5H741M737,97.5H741M737,98.5H740M736.5,96V102M738.5,94V102" stroke="#00ff00" shape-rendering="crispEdges"/>
<text filter="url(#px)" x="782.5" y="101.0" font-family="Liberation Sans" font-size="9" font-weight="bold" fill="#00ff00" text-anchor="middle" textLength="3.5" lengthAdjust="spacingAndGlyphs">6</text>
<path d="M726,106.5H731M727,107.5H731M726,110.5H731M726,111.5H731M727.5,104V112M728.5,106V111" stroke="#00ff00" shape-rendering="crispEdges"/>
<path d="M732,105.5H736M733,107.5H737M733,108.5H737M732,110.5H737M732.5,106V111M736.5,105V112" stroke="#00ff00" shape-rendering="crispEdges"/>
<text filter="url(#px)" x="761" y="111.08333333333333" font-family="Liberation Sans" font-size="9" font-weight="bold" fill="#00ff00" text-anchor="middle" textLength="4.5" lengthAdjust="spacingAndGlyphs">b</text>
<text filter="url(#px)" x="782.5" y="111.08333333333333" font-family="Liberation Sans" font-size="9" font-weight="bold" fill="#00ff00" text-anchor="middle" textLength="3.5" lengthAdjust="spacingAndGlyphs">9</text>
<path d="M717,115.5H720M716,118.5H720M717,119.5H721M716,120.5H721M717.5,116V122M719.5,115V121" stroke="#00ff00" shape-rendering="crispEdges"/>
<path d="M722,115.5H726M723,118.5H727M722,120.5H726M723,121.5H726M722.5,115V121M725.5,115V122" stroke="#00ff00" shape-rendering="crispEdges"/>
<path d="M727,114.5H731M727,116.5H730M727,117.5H731M726,121.5H731M726.5,116V122M728.5,114V121" stroke="#00ff00" shape-rendering="crispEdges"/>
<path d="M733,115.5H737M733,118.5H736M733,119.5H737M732,121.5H737M732.5,115V121M734.5,115V121" stroke="#00ff00" shape-rendering="crispEdges"/>
<path d="M737,116.5H741M737,117.5H740M737,120.5H741M736,121.5H741M736.5,116V121M738.5,115V121" stroke="#00ff00" shape-rendering="crispEdges"/>
<path d="M743,115.5H746M742,117.5H746M742,118.5H747M743,120.5H747M742.5,114V121M744.5,115V121" stroke="#00ff00" shape-rendering="crispEdges"/>
<text filter="url(#px)" x="761" y="121.16666666666667" font-family="Liberation Sans" font-size="9" font-weight="bold" fill="#00ff00" text-anchor="middle" textLength="11.5" lengthAdjust="spacingAndGlyphs">fpt</text>
<text filter="url(#px)" x="782.5" y="121.16666666666667" font-family="Liberation Sans" font-size="9" font-weight="bold" fill="#00ff00" text-anchor="middle" textLength="17" lengthAdjust="spacingAndGlyphs">±0.009</text>
<path d="M714,126.5H719M714,127.5H718M715,130.5H719M715,131.5H718M714.5,124V132M717.5,124V131" stroke="#00ff00" shape-rendering="crispEdges"/>
<path d="M720,126.5H724M720,129.5H723M720,130.5H724M719,131.5H724M721.5,124V132M723.5,126V131" stroke="#00ff00" shape-rendering="crispEdges"/>
<path d="M724,126.5H729M724,127.5H729M725,130.5H729M725,131.5H729M725.5,125V131M727.5,126V132" stroke="#00ff00" shape-rendering="crispEdges"/>
<path d="M730,124.5H733M730,127.5H734M730,129.5H733M730,130.5H734M730.5,126V132M732.5,124V131" stroke="#00ff00" shape-rendering="crispEdges"/>
<path d="M734,127.5H739M734,129.5H738M735,130.5H738M734,131.5H739M736.5,125V131M737.5,125V132" stroke="#00ff00" shape-rendering="crispEdges"/>
<path d="M740,125.5H744M739,129.5H744M739,130.5H744M739,131.5H743M739.5,124V131M743.5,126V131" stroke="#00ff00" shape-rendering="crispEdges"/>
<path d="M745,124.5H748M744,125.5H749M744,126.5H748M745,130.5H748M745.5,125V132M748.5,125V132" stroke="#00ff00" shape-rendering="crispEdges"/>
<text filter="url(#px)" x="761" y="131.25" font-family="Liberation Sans" font-size="9" font-weight="bold" fill="#00ff00" text-anchor="middle" textLength="8.0" lengthAdjust="spacingAndGlyphs">Fp</text>
<text filter="url(#px)" x="782.5" y="131.25" font-family="Liberation Sans" font-size="9" font-weight="bold" fill="#00ff00" text-anchor="middle" textLength="17" lengthAdjust="spacingAndGlyphs">0.025</text>
<path d="M719,134.5H723M720,136.5H724M720,137.5H724M720,141.5H723M719.5,134V141M723.5,134V141" stroke="#00ff00" shape-rendering="crispEdges"/>
<path d="M725,136.5H729M724,137.5H728M724,139.5H728M724,140.5H729M724.5,135V142M725.5,135V141" stroke="#00ff00" shape-rendering="crispEdges"/>
<path d="M730,135.5H733M729,137.5H734M730,138.5H734M729,140.5H734M730.5,136V142M733.5,135V142" stroke="#00ff00" shape-rendering="crispEdges"/>
<path d="M734,134.5H739M735,135.5H739M734,137.5H738M734,139.5H738M734.5,136V141M736.5,135V141" stroke="#00ff00" shape-rendering="crispEdges"/>
<path d="M739,134.5H743M740,135.5H744M739,139.5H743M740,141.5H743M739.5,135V142M741.5,134V141" stroke="#00ff00" shape-rendering="crispEdges"/>
<text filter="url(#px)" x="761" y="141.33333333333331" font-family="Liberation Sans" font-size="9" font-weight="bold" fill="#00ff00" text-anchor="middle" textLength="8.0" lengthAdjust="spacingAndGlyphs">Fα</text>
<text filter="url(#px)" x="782.5" y="141.33333333333331" font-family="Liberation Sans" font-size="9" font-weight="bold" fill="#00ff00" text-anchor="middle" textLength="17" lengthAdjust="spacingAndGlyphs">0.013</text>
<path d="M717,146.5H720M716,147.5H720M716,148.5H720M716,151.5H720M717.5,144V151M718.5,144V152" stroke="#00ff00" shape-rendering="crispEdges"/>
<path d="M723,144.5H726M723,145.5H727M723,148.5H726M723,149.5H726M724.5,144V152M726.5,144V152" stroke="#00ff00" shape-rendering="crispEdges"/>
<path d="M727,145.5H730M726,147.5H730M726,149.5H731M727,150.5H731M728.5,146V152M729.5,145V151" stroke="#00ff00" shape-rendering="crispEdges"/>
<path d="M733,144.5H737M732,146.5H736M732,148.5H737M733,151.5H736M733.5,144V151M736.5,144V152" stroke="#00ff00" shape-rendering="crispEdges"/>
<path d="M737,144.5H740M736,145.5H741M736,148.5H740M737,151.5H741M736.5,146V152M739.5,145V151" stroke="#00ff00" shape-rendering="crispEdges"/>
<path d="M742,146.5H746M742,148.5H747M742,149.5H747M742,151.5H746M744.5,146V152M746.5,145V152" stroke="#00ff00" shape-rendering="crispEdges"/>
<text filter="url(#px)" x="761" y="151.41666666666669" font-family="Liberation Sans" font-size="9" font-weight="bold" fill="#00ff00" text-anchor="middle" textLength="8.0" lengthAdjust="spacingAndGlyphs">Fβ</text>
<text filter="url(#px)" x="782.5" y="151.41666666666669" font-family="Liberation Sans" font-size="9" font-weight="bold" fill="#00ff00" text-anchor="middle" textLength="17" lengthAdjust="spacingAndGlyphs">0.014</text>
<path d="M548,472.5H552M547,475.5H552M548,476.5H552M548,477.5H551M547,478.5H551M547.5,471V480M548.5,471V480" stroke="#ffffff" shape-rendering="crispEdges"/>
<path transform="translate(1,0)" d="M548,472.5H552M547,475.5H552M548,476.5H552M548,477.5H551M547,478.5H551M547.5,471V480M548.5,471V480" stroke="#ffffff" shape-rendering="crispEdges"/>
<path d="M554,472.5H559M555,473.5H559M554,474.5H558M555,475.5H559M554,478.5H559M556.5,472V480M557.5,473V480" stroke="#ffffff" shape-rendering="crispEdges"/>
<path transform="translate(1,0)" d="M554,472.5H559M555,473.5H559M554,474.5H558M555,475.5H559M554,478.5H559M556.5,472V480M557.5,473V480" stroke="#ffffff" shape-rendering="crispEdges"/>
<path d="M560,471.5H565M560,473.5H564M561,474.5H565M561,476.5H565M561,478.5H565M561.5,473V480M562.5,473V480" stroke="#ffffff" shape-rendering="crispEdges"/>
<path transform="translate(1,0)" d="M560,471.5H565M560,473.5H564M561,474.5H565M561,476.5H565M561,478.5H565M561.5,473V480M562.5,473V480" stroke="#ffffff" shape-rendering="crispEdges"/>
<path d="M568,473.5H571M568,474.5H571M567,475.5H571M567,476.5H571M568,477.5H572M567.5,471V479M570.5,471V479" stroke="#ffffff" shape-rendering="crispEdges"/>
<path transform="translate(1,0)" d="M568,473.5H571M568,474.5H571M567,475.5H571M567,476.5H571M568,477.5H572M567.5,471V479M570.5,471V479" stroke="#ffffff" shape-rendering="crispEdges"/>
<path d="M573,472.5H578M573,473.5H578M574,474.5H578M574,475.5H578M573,479.5H577M574.5,472V480M576.5,473V480" stroke="#ffffff" shape-rendering="crispEdges"/>
<path transform="translate(1,0)" d="M573,472.5H578M573,473.5H578M574,474.5H578M574,475.5H578M573,479.5H577M574.5,472V480M576.5,473V480" stroke="#ffffff" shape-rendering="crispEdges"/>
<path d="M580,472.5H584M581,474.5H585M581,477.5H585M580,478.5H585M581,479.5H585M581.5,472V480M582.5,473V480" stroke="#ffffff" shape-rendering="crispEdges"/>
<path transform="translate(1,0)" d="M580,472.5H584M581,474.5H585M581,477.5H585M580,478.5H585M581,479.5H585M581.5,472V480M582.5,473V480" stroke="#ffffff" shape-rendering="crispEdges"/>
<path d="M586,471.5H591M586,472.5H591M586,474.5H590M586,475.5H590M587,477.5H590M586.5,473V479M588.5,472V480" stroke="#ffffff" shape-rendering="crispEdges"/>
<path transform="translate(1,0)" d="M586,471.5H591M586,472.5H591M586,474.5H590M586,475.5H590M587,477.5H590M586.5,473V479M588.5,472V480" stroke="#ffffff" shape-rendering="crispEdges"/>
<path d="M520,494.5H525M520,495.5H524M521,497.5H525M521,498.5H524M523.5,492V499M524.5,493V500" stroke="#00ff00" shape-rendering="crispEdges"/>
<path d="M535,493.5H539M534,494.5H539M534,495.5H538M534,499.5H539M534.5,494V499M536.5,494V500" stroke="#00ff00" shape-rendering="crispEdges"/>
<path d="M520,506.5H524M521,510.5H525M520,512.5H525M521,513.5H524M520.5,506V513M521.5,508V513" stroke="#00ff00" shape-rendering="crispEdges"/>
<path d="M535,507.5H539M535,508.5H538M534,510.5H539M534,513.5H538M535.5,506V513M537.5,508V513" stroke="#00ff00" shape-rendering="crispEdges"/>
<path d="M521,520.5H524M520,521.5H524M521,522.5H524M521,526.5H524M520.5,521V528M524.5,521V527" stroke="#00ff00" shape-rendering="crispEdges"/>
<path d="M535,521.5H538M535,523.5H538M534,525.5H539M534,527.5H539M534.5,521V527M538.5,521V527" stroke="#00ff00" shape-rendering="crispEdges"/>
<path d="M555,491.5H559M556,492.5H560M556,493.5H560M556,495.5H559M555,498.5H560M556,500.5H559M555.5,491V501M559.5,491V501" stroke="#ffffff" shape-rendering="crispEdges"/>
<path transform="translate(1,0)" d="M555,491.5H559M556,492.5H560M556,493.5H560M556,495.5H559M555,498.5H560M556,500.5H559M555.5,491V501M559.5,491V501" stroke="#ffffff" shape-rendering="crispEdges"/>
<path d="M563,491.5H567M562,492.5H566M563,493.5H566M562,496.5H567M562,498.5H567M562,499.5H567M564.5,492V501M565.5,491V501" stroke="#ffffff" shape-rendering="crispEdges"/>
<path transform="translate(1,0)" d="M563,491.5H567M562,492.5H566M563,493.5H566M562,496.5H567M562,498.5H567M562,499.5H567M564.5,492V501M565.5,491V501" stroke="#ffffff" shape-rendering="crispEdges"/>
<path d="M570,491.5H574M570,492.5H574M570,495.5H574M570,497.5H574M570,499.5H574M571,500.5H574M571.5,491V500M573.5,491V501" stroke="#ffffff" shape-rendering="crispEdges"/>
<path transform="translate(1,0)" d="M570,491.5H574M570,492.5H574M570,495.5H574M570,497.5H574M570,499.5H574M571,500.5H574M571.5,491V500M573.5,491V501" stroke="#ffffff" shape-rendering="crispEdges"/>
<path d="M577,491.5H581M578,492.5H581M578,494.5H582M577,495.5H582M577,496.5H581M577,497.5H582M579.5,491V500M581.5,491V500" stroke="#ffffff" shape-rendering="crispEdges"/>
<path transform="translate(1,0)" d="M577,491.5H581M578,492.5H581M578,494.5H582M577,495.5H582M577,496.5H581M577,497.5H582M579.5,491V500M581.5,491V500" stroke="#ffffff" shape-rendering="crispEdges"/>
<path d="M590,494.5H594M591,495.5H594M591,496.5H594M591,497.5H594M590,498.5H594M590,500.5H594M591.5,491V501M593.5,493V501" stroke="#ffffff" shape-rendering="crispEdges"/>
<path transform="translate(1,0)" d="M590,494.5H594M591,495.5H594M591,496.5H594M591,497.5H594M590,498.5H594M590,500.5H594M591.5,491V501M593.5,493V501" stroke="#ffffff" shape-rendering="crispEdges"/>
<path d="M596,491.5H600M596,492.5H599M596,493.5H600M597,496.5H600M596,497.5H600M596,498.5H600M596.5,491V501M598.5,493V501" stroke="#ffffff" shape-rendering="crispEdges"/>
<path transform="translate(1,0)" d="M596,491.5H600M596,492.5H599M596,493.5H600M597,496.5H600M596,497.5H600M596,498.5H600M596.5,491V501M598.5,493V501" stroke="#ffffff" shape-rendering="crispEdges"/>
<path d="M603,491.5H605M603,492.5H606M603,495.5H605M603,497.5H606M603,498.5H605M603,499.5H605M603.5,493V501M604.5,492V501" stroke="#ffffff" shape-rendering="crispEdges"/>
<path transform="translate(1,0)" d="M603,491.5H605M603,492.5H606M603,495.5H605M603,497.5H606M603,498.5H605M603,499.5H605M603.5,493V501M604.5,492V501" stroke="#ffffff" shape-rendering="crispEdges"/>
<path d="M608,491.5H611M608,492.5H611M608,493.5H612M609,494.5H612M608,497.5H611M609,499.5H612M609.5,492V501M610.5,492V500" stroke="#ffffff" shape-rendering="crispEdges"/>
<path transform="translate(1,0)" d="M608,491.5H611M608,492.5H611M608,493.5H612M609,494.5H612M608,497.5H611M609,499.5H612M609.5,492V501M610.5,492V500" stroke="#ffffff" shape-rendering="crispEdges"/>
<path d="M615,492.5H619M616,493.5H619M616,495.5H618M615,496.5H618M616,498.5H619M616,499.5H619M615.5,492V501M618.5,492V500" stroke="#ffffff" shape-rendering="crispEdges"/>
<path transform="translate(1,0)" d="M615,492.5H619M616,493.5H619M616,495.5H618M615,496.5H618M616,498.5H619M616,499.5H619M615.5,492V501M618.5,492V500" stroke="#ffffff" shape-rendering="crispEdges"/>
<path d="M621,492.5H624M622,493.5H625M622,494.5H624M621,496.5H624M622,497.5H624M621,499.5H625M621.5,492V500M624.5,493V501" stroke="#ffffff" shape-rendering="crispEdges"/>
<path transform="translate(1,0)" d="M621,492.5H624M622,493.5H625M622,494.5H624M621,496.5H624M622,497.5H624M621,499.5H625M621.5,492V500M624.5,493V501" stroke="#ffffff" shape-rendering="crispEdges"/>
<path d="M555,507.5H559M556,508.5H560M555,509.5H559M555,510.5H559M555,512.5H560M555,513.5H560M556.5,506V515M559.5,505V514" stroke="#ffffff" shape-rendering="crispEdges"/>
<path transform="translate(1,0)" d="M555,507.5H559M556,508.5H560M555,509.5H559M555,510.5H559M555,512.5H560M555,513.5H560M556.5,506V515M559.5,505V514" stroke="#ffffff" shape-rendering="crispEdges"/>
<path d="M563,505.5H566M562,506.5H567M563,509.5H566M562,510.5H566M563,511.5H567M562,514.5H566M563.5,507V514M564.5,505V515" stroke="#ffffff" shape-rendering="crispEdges"/>
<path transform="translate(1,0)" d="M563,505.5H566M562,506.5H567M563,509.5H566M562,510.5H566M563,511.5H567M562,514.5H566M563.5,507V514M564.5,505V515" stroke="#ffffff" shape-rendering="crispEdges"/>
<path d="M570,508.5H574M571,509.5H574M571,510.5H575M571,511.5H575M571,513.5H575M571,514.5H574M571.5,506V514M574.5,505V514" stroke="#ffffff" shape-rendering="crispEdges"/>
<path transform="translate(1,0)" d="M570,508.5H574M571,509.5H574M571,510.5H575M571,511.5H575M571,513.5H575M571,514.5H574M571.5,506V514M574.5,505V514" stroke="#ffffff" shape-rendering="crispEdges"/>
<path d="M577,505.5H581M577,507.5H582M577,508.5H581M577,510.5H581M577,511.5H581M577,513.5H581M577.5,507V514M580.5,506V514" stroke="#ffffff" shape-rendering="crispEdges"/>
<path transform="translate(1,0)" d="M577,505.5H581M577,507.5H582M577,508.5H581M577,510.5H581M577,511.5H581M577,513.5H581M577.5,507V514M580.5,506V514" stroke="#ffffff" shape-rendering="crispEdges"/>
<path d="M594,505.5H598M594,507.5H599M593,508.5H599M594,509.5H598M594,511.5H598M593,512.5H599M593.5,506V514M595.5,507V515M598.5,506V514" stroke="#ffffff" shape-rendering="crispEdges"/>
<path transform="translate(1,0)" d="M594,505.5H598M594,507.5H599M593,508.5H599M594,509.5H598M594,511.5H598M593,512.5H599M593.5,506V514M595.5,507V515M598.5,506V514" stroke="#ffffff" shape-rendering="crispEdges"/>
<path d="M600,505.5H605M601,506.5H605M601,507.5H606M601,508.5H605M600,511.5H605M601,513.5H605M601.5,506V515M603.5,506V515M604.5,507V514" stroke="#ffffff" shape-rendering="crispEdges"/>
<path transform="translate(1,0)" d="M600,505.5H605M601,506.5H605M601,507.5H606M601,508.5H605M600,511.5H605M601,513.5H605M601.5,506V515M603.5,506V515M604.5,507V514" stroke="#ffffff" shape-rendering="crispEdges"/>
<path d="M609,507.5H614M609,508.5H613M608,509.5H614M609,510.5H614M609,513.5H614M608,514.5H614M608.5,505V514M611.5,506V515M612.5,507V515" stroke="#ffffff" shape-rendering="crispEdges"/>
<path transform="translate(1,0)" d="M609,507.5H614M609,508.5H613M608,509.5H614M609,510.5H614M609,513.5H614M608,514.5H614M608.5,505V514M611.5,506V515M612.5,507V515" stroke="#ffffff" shape-rendering="crispEdges"/>
<path d="M616,506.5H621M616,507.5H621M616,508.5H622M617,510.5H622M616,512.5H621M617,513.5H622M617.5,505V514M619.5,506V515M620.5,506V514" stroke="#ffffff" shape-rendering="crispEdges"/>
<path transform="translate(1,0)" d="M616,506.5H621M616,507.5H621M616,508.5H622M617,510.5H622M616,512.5H621M617,513.5H622M617.5,505V514M619.5,506V515M620.5,506V514" stroke="#ffffff" shape-rendering="crispEdges"/>
<path d="M555,520.5H559M556,521.5H559M556,522.5H559M556,523.5H559M556,526.5H560M555,527.5H559M555.5,521V529M559.5,519V529" stroke="#ffffff" shape-rendering="crispEdges"/>
<path transform="translate(1,0)" d="M555,520.5H559M556,521.5H559M556,522.5H559M556,523.5H559M556,526.5H560M555,527.5H559M555.5,521V529M559.5,519V529" stroke="#ffffff" shape-rendering="crispEdges"/>
<path d="M562,519.5H566M562,520.5H566M563,522.5H566M562,524.5H566M563,526.5H566M563,527.5H566M563.5,521V529M565.5,520V528" stroke="#ffffff" shape-rendering="crispEdges"/>
<path transform="translate(1,0)" d="M562,519.5H566M562,520.5H566M563,522.5H566M562,524.5H566M563,526.5H566M563,527.5H566M563.5,521V529M565.5,520V528" stroke="#ffffff" shape-rendering="crispEdges"/>
<path d="M570,521.5H574M570,523.5H574M570,524.5H574M571,525.5H575M570,526.5H575M571,527.5H574M572.5,521V529M574.5,520V528" stroke="#ffffff" shape-rendering="crispEdges"/>
<path transform="translate(1,0)" d="M570,521.5H574M570,523.5H574M570,524.5H574M571,525.5H575M570,526.5H575M571,527.5H574M572.5,521V529M574.5,520V528" stroke="#ffffff" shape-rendering="crispEdges"/>
<path d="M577,519.5H582M577,520.5H582M578,522.5H582M577,523.5H582M577,527.5H581M577,528.5H582M577.5,520V529M580.5,520V528" stroke="#ffffff" shape-rendering="crispEdges"/>
<path transform="translate(1,0)" d="M577,519.5H582M577,520.5H582M578,522.5H582M577,523.5H582M577,527.5H581M577,528.5H582M577.5,520V529M580.5,520V528" stroke="#ffffff" shape-rendering="crispEdges"/>
<path d="M594,519.5H599M593,521.5H598M594,523.5H598M593,525.5H599M594,526.5H599M594,527.5H598M593.5,521V529M596.5,519V528M597.5,519V529" stroke="#ffffff" shape-rendering="crispEdges"/>
<path transform="translate(1,0)" d="M594,519.5H599M593,521.5H598M594,523.5H598M593,525.5H599M594,526.5H599M594,527.5H598M593.5,521V529M596.5,519V528M597.5,519V529" stroke="#ffffff" shape-rendering="crispEdges"/>
<path d="M600,519.5H605M600,524.5H605M600,525.5H605M600,526.5H606M601,527.5H606M600,528.5H605M600.5,521V528M601.5,520V528M605.5,519V529" stroke="#ffffff" shape-rendering="crispEdges"/>
<path transform="translate(1,0)" d="M600,519.5H605M600,524.5H605M600,525.5H605M600,526.5H606M601,527.5H606M600,528.5H605M600.5,521V528M601.5,520V528M605.5,519V529" stroke="#ffffff" shape-rendering="crispEdges"/>
<path d="M609,519.5H614M609,523.5H614M609,524.5H613M609,525.5H613M608,527.5H614M608,528.5H613M608.5,521V529M610.5,521V528M611.5,520V528" stroke="#ffffff" shape-rendering="crispEdges"/>
<path transform="translate(1,0)" d="M609,519.5H614M609,523.5H614M609,524.5H613M609,525.5H613M608,527.5H614M608,528.5H613M608.5,521V529M610.5,521V528M611.5,520V528" stroke="#ffffff" shape-rendering="crispEdges"/>
<path d="M616,519.5H622M617,521.5H621M616,523.5H621M617,524.5H621M616,525.5H621M617,526.5H622M618.5,520V528M620.5,520V528M621.5,519V529" stroke="#ffffff" shape-rendering="crispEdges"/>
<path transform="translate(1,0)" d="M616,519.5H622M617,521.5H621M616,523.5H621M617,524.5H621M616,525.5H621M617,526.5H622M618.5,520V528M620.5,520V528M621.5,519V529" stroke="#ffffff" shape-rendering="crispEdges"/>
<path d="M638,466.5H641M637,469.5H641M638,471.5H642M637,472.5H641M638.5,467V473M639.5,467V472" stroke="#00ff00" shape-rendering="crispEdges"/>
<path d="M652,466.5H655M651,467.5H655M651,470.5H656M652,472.5H655M651.5,467V472M655.5,466V473" stroke="#00ff00" shape-rendering="crispEdges"/>
<path d="M720,465.5H723M720,466.5H724M719,468.5H724M720,471.5H723M720.5,465V472M721.5,467V472" stroke="#00ff00" shape-rendering="crispEdges"/>
<path d="M733,466.5H737M732,467.5H737M732,469.5H736M732,472.5H736M732.5,466V472M734.5,465V472" stroke="#00ff00" shape-rendering="crispEdges"/>
<path d="M638,479.5H642M637,481.5H642M637,485.5H641M638,486.5H641M638.5,479V486M641.5,479V487" stroke="#00ff00" shape-rendering="crispEdges"/>
<path d="M651,480.5H655M651,481.5H655M651,483.5H656M651,486.5H656M651.5,480V486M654.5,479V487" stroke="#00ff00" shape-rendering="crispEdges"/>
<path d="M719,479.5H723M719,481.5H724M720,482.5H723M719,483.5H723M719.5,480V486M723.5,480V486" stroke="#00ff00" shape-rendering="crispEdges"/>
<path d="M732,480.5H737M732,481.5H736M732,482.5H737M732,484.5H737M733.5,479V486M735.5,481V487" stroke="#00ff00" shape-rendering="crispEdges"/>
<path d="M638,492.5H641M637,495.5H641M637,498.5H641M637,499.5H641M637.5,492V500M640.5,492V499" stroke="#00ff00" shape-rendering="crispEdges"/>
<path d="M651,493.5H656M651,494.5H655M652,495.5H655M651,499.5H655M654.5,493V500M655.5,493V499" stroke="#00ff00" shape-rendering="crispEdges"/>
<path d="M720,492.5H723M719,493.5H723M719,496.5H723M720,499.5H723M719.5,492V500M720.5,492V499" stroke="#00ff00" shape-rendering="crispEdges"/>
<path d="M732,492.5H736M733,493.5H737M733,495.5H737M733,496.5H737M733.5,493V499M734.5,492V499" stroke="#00ff00" shape-rendering="crispEdges"/>
<path d="M682,466.5H687M682,468.5H687M683,469.5H686M682,470.5H687M682,472.5H687M683.5,467V473M686.5,465V474" stroke="#ffffff" shape-rendering="crispEdges"/>
<path transform="translate(1,0)" d="M682,466.5H687M682,468.5H687M683,469.5H686M682,470.5H687M682,472.5H687M683.5,467V473M686.5,465V474" stroke="#ffffff" shape-rendering="crispEdges"/>
<path d="M690,465.5H693M690,466.5H694M689,470.5H693M690,471.5H694M690,472.5H694M691.5,465V473M693.5,465V474" stroke="#ffffff" shape-rendering="crispEdges"/>
<path transform="translate(1,0)" d="M690,465.5H693M690,466.5H694M689,470.5H693M690,471.5H694M690,472.5H694M691.5,465V473M693.5,465V474" stroke="#ffffff" shape-rendering="crispEdges"/>
<path d="M763,465.5H767M763,467.5H767M764,468.5H768M764,469.5H768M764,470.5H767M763.5,467V474M767.5,467V474" stroke="#ffffff" shape-rendering="crispEdges"/>
<path transform="translate(1,0)" d="M763,465.5H767M763,467.5H767M764,468.5H768M764,469.5H768M764,470.5H767M763.5,467V474M767.5,467V474" stroke="#ffffff" shape-rendering="crispEdges"/>
<path d="M770,465.5H774M771,466.5H775M770,468.5H775M770,469.5H774M770,473.5H774M771.5,467V474M774.5,467V473" stroke="#ffffff" shape-rendering="crispEdges"/>
<path transform="translate(1,0)" d="M770,465.5H774M771,466.5H775M770,468.5H775M770,469.5H774M770,473.5H774M771.5,467V474M774.5,467V473" stroke="#ffffff" shape-rendering="crispEdges"/>
<text filter="url(#px)" x="688.5" y="484.5" font-family="Liberation Sans" font-size="6" font-weight="bold" fill="#00ff00" text-anchor="middle" textLength="22" lengthAdjust="spacingAndGlyphs">40CrMoV</text>
<path d="M683,492.5H687M683,493.5H688M682,497.5H688M683,498.5H688M682,500.5H688M682.5,492V500M684.5,494V500M687.5,492V501" stroke="#ffffff" shape-rendering="crispEdges"/>
<path transform="translate(1,0)" d="M683,492.5H687M683,493.5H688M682,497.5H688M683,498.5H688M682,500.5H688M682.5,492V500M684.5,494V500M687.5,492V501" stroke="#ffffff" shape-rendering="crispEdges"/>
<path d="M691,496.5H695M691,497.5H696M691,498.5H695M691,499.5H695M690,500.5H695M690.5,494V501M693.5,494V500M695.5,492V500" stroke="#ffffff" shape-rendering="crispEdges"/>
<path transform="translate(1,0)" d="M691,496.5H695M691,497.5H696M691,498.5H695M691,499.5H695M690,500.5H695M690.5,494V501M693.5,494V500M695.5,492V500" stroke="#ffffff" shape-rendering="crispEdges"/>
<text filter="url(#px)" x="770" y="500.5" font-family="Liberation Sans" font-size="10" font-weight="bold" fill="#ffffff" text-anchor="middle" textLength="11" lengthAdjust="spacingAndGlyphs">1:1</text>
<path d="M638,508.5H643M637,510.5H643M637,512.5H642M638,515.5H642M637.5,510V516M638.5,508V516M639.5,510V515" stroke="#00ff00" shape-rendering="crispEdges"/>
<path d="M649,508.5H655M650,512.5H655M649,513.5H654M649,515.5H654M649.5,509V516M651.5,508V516M653.5,510V515" stroke="#00ff00" shape-rendering="crispEdges"/>
<path d="M637,520.5H642M638,522.5H642M638,523.5H643M637,524.5H642M637.5,520V527M638.5,521V526M640.5,519V526" stroke="#00ff00" shape-rendering="crispEdges"/>
<path d="M649,521.5H655M650,523.5H655M649,525.5H654M650,526.5H655M651.5,520V527M652.5,519V526M654.5,521V526" stroke="#00ff00" shape-rendering="crispEdges"/>
<g stroke="#00ff00" stroke-width="2" fill="none" shape-rendering="crispEdges"><path d="M698,526V515H711V525L709,524M704,507V515M704,515L699,522M704,517L710,524"/><path d="M724,507V513M724,509H731M716,513H734M719,510V513M718,515V525H731V515M724,515L720,522M724,517L729,522"/><path d="M738,507V526M752,507V526M738,508H752M738,525H752M741,511H749M740,514H750M745,510V521M742,517H748M742,520H748"/><path stroke-width="1" d="M741,512.5H749M741,518.5H749M742.5,515V522M747.5,515V522M741,522.5H749"/></g>
<path d="M372,473.5H378M373,474.5H379M373,478.5H378M373,479.5H379M372.5,474V480M373.5,474V480M374.5,473V479M377.5,474V479" stroke="#00ff00" shape-rendering="crispEdges"/>
<path d="M381,473.5H386M380,474.5H386M380,476.5H387M381,477.5H387M380.5,473V479M382.5,474V480M384.5,473V479M386.5,474V480" stroke="#00ff00" shape-rendering="crispEdges"/>
<path d="M389,475.5H394M389,477.5H394M388,478.5H394M389,479.5H394M390.5,473V480M392.5,474V479M393.5,472V479M394.5,474V479" stroke="#00ff00" shape-rendering="crispEdges"/>
<path d="M396,472.5H402M396,474.5H403M396,475.5H402M397,477.5H402M397.5,474V479M398.5,474V479M400.5,474V479M402.5,473V479" stroke="#00ff00" shape-rendering="crispEdges"/>
<text filter="url(#px)" x="360" y="493.5" font-family="Liberation Sans" font-size="7" font-weight="bold" fill="#00ff00" text-anchor="start" >1.</text>
<path d="M366,486.5H371M366,488.5H370M367,490.5H370M366,492.5H371M366.5,487V492M369.5,487V492" stroke="#00ff00" shape-rendering="crispEdges"/>
<path d="M372,488.5H376M373,490.5H376M372,491.5H376M372,492.5H377M372.5,488V492M376.5,488V492" stroke="#00ff00" shape-rendering="crispEdges"/>
<path d="M378,487.5H383M379,489.5H383M378,490.5H383M379,492.5H383M380.5,488V492M382.5,486V493" stroke="#00ff00" shape-rendering="crispEdges"/>
<path d="M383,486.5H388M383,488.5H388M383,490.5H387M384,491.5H388M385.5,488V493M386.5,487V493" stroke="#00ff00" shape-rendering="crispEdges"/>
<text filter="url(#px)" x="390" y="493.5" font-family="Liberation Sans" font-size="7" font-weight="bold" fill="#00ff00" text-anchor="start" textLength="31" lengthAdjust="spacingAndGlyphs">250 280HBS;</text>
<text filter="url(#px)" x="360" y="504.5" font-family="Liberation Sans" font-size="7" font-weight="bold" fill="#00ff00" text-anchor="start" >2.</text>
<path d="M366,498.5H371M366,499.5H370M367,501.5H370M366,502.5H371M366.5,499V504M370.5,497V505" stroke="#00ff00" shape-rendering="crispEdges"/>
<path d="M372,497.5H376M372,498.5H376M373,499.5H377M372,502.5H377M372.5,498V505M374.5,498V505" stroke="#00ff00" shape-rendering="crispEdges"/>
<path d="M379,497.5H383M379,498.5H382M379,500.5H382M379,503.5H383M379.5,497V504M382.5,499V505" stroke="#00ff00" shape-rendering="crispEdges"/>
<path d="M384,499.5H389M384,500.5H388M385,502.5H389M384,503.5H388M384.5,498V504M385.5,497V504" stroke="#00ff00" shape-rendering="crispEdges"/>
<path d="M391,497.5H395M391,499.5H395M391,500.5H394M391,503.5H395M390.5,498V505M393.5,498V505" stroke="#00ff00" shape-rendering="crispEdges"/>
<path d="M397,498.5H401M397,502.5H401M398,503.5H402M397,504.5H401M397.5,498V505M398.5,499V504" stroke="#00ff00" shape-rendering="crispEdges"/>
<path d="M403,498.5H408M404,501.5H408M404,502.5H407M404,503.5H408M405.5,498V505M406.5,497V505" stroke="#00ff00" shape-rendering="crispEdges"/>
<path d="M410,498.5H414M410,499.5H414M409,500.5H414M410,501.5H414M409.5,499V505M410.5,497V504" stroke="#00ff00" shape-rendering="crispEdges"/>
<path d="M416,497.5H420M416,498.5H419M416,499.5H419M416,501.5H420M415.5,498V505M416.5,497V504" stroke="#00ff00" shape-rendering="crispEdges"/>
<text filter="url(#px)" x="420" y="504.5" font-family="Liberation Sans" font-size="7" font-weight="bold" fill="#00ff00" text-anchor="start" textLength="11" lengthAdjust="spacingAndGlyphs">IT7.</text>
<text filter="url(#px)" x="401" y="59" font-family="Liberation Sans" font-size="7" font-weight="bold" fill="#00ff00" text-anchor="middle" transform="rotate(-60 401 59)" textLength="11" lengthAdjust="spacingAndGlyphs">Φ365</text>
<text filter="url(#px)" x="362" y="199" font-family="Liberation Sans" font-size="7" font-weight="bold" fill="#00ff00" text-anchor="middle" transform="rotate(-33 362 199)" textLength="14" lengthAdjust="spacingAndGlyphs">Φ131</text>
<text filter="url(#px)" x="418" y="230" font-family="Liberation Sans" font-size="7" font-weight="bold" fill="#00ff00" text-anchor="middle" transform="rotate(-37 418 230)" textLength="15" lengthAdjust="spacingAndGlyphs">4-Φ33</text>
<text filter="url(#px)" x="389" y="342" font-family="Liberation Sans" font-size="7" font-weight="bold" fill="#00ff00" text-anchor="middle" transform="rotate(44 389 342)" textLength="11" lengthAdjust="spacingAndGlyphs">Φ208</text></svg></body></html>
